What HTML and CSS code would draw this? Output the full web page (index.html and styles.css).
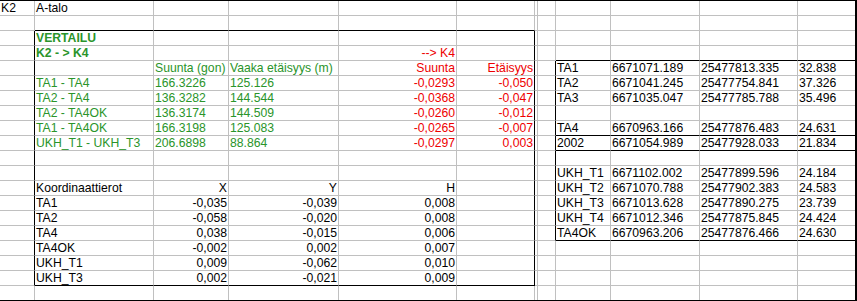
FILE: index.html
```html
<!DOCTYPE html>
<html lang="fi">
<head>
<meta charset="utf-8">
<title>K2 A-talo</title>
<link rel="stylesheet" href="styles.css">
</head>
<body>
<div class="sheet">
  <!-- row 0 -->
  <div class="c">K2</div><div class="c">A-talo</div><div class="c"></div><div class="c"></div><div class="c"></div><div class="c"></div><div class="c"></div><div class="c"></div><div class="c"></div><div class="c"></div><div class="c"></div><div class="c"></div>
  <!-- row 1 -->
  <div class="c"></div><div class="c bb"></div><div class="c bb"></div><div class="c bb"></div><div class="c bb"></div><div class="c bb"></div><div class="c"></div><div class="c"></div><div class="c"></div><div class="c"></div><div class="c"></div><div class="c"></div>
  <!-- row 2 -->
  <div class="c br"></div><div class="c g b">VERTAILU</div><div class="c"></div><div class="c"></div><div class="c"></div><div class="c br"></div><div class="c"></div><div class="c"></div><div class="c"></div><div class="c"></div><div class="c"></div><div class="c"></div>
  <!-- row 3 -->
  <div class="c br"></div><div class="c g b">K2 - &gt; K4</div><div class="c"></div><div class="c"></div><div class="c r red">--&gt; K4</div><div class="c br"></div><div class="c"></div><div class="c"></div><div class="c bb"></div><div class="c bb"></div><div class="c bb"></div><div class="c bb"></div>
  <!-- row 4 -->
  <div class="c br"></div><div class="c"></div><div class="c g">Suunta (gon)</div><div class="c g">Vaaka etäisyys (m)</div><div class="c r red">Suunta</div><div class="c r red br">Etäisyys</div><div class="c"></div><div class="c br"></div><div class="c">TA1</div><div class="c">6671071.189</div><div class="c">25477813.335</div><div class="c">32.838</div>
  <!-- row 5 -->
  <div class="c br"></div><div class="c g">TA1 - TA4</div><div class="c g">166.3226</div><div class="c g">125.126</div><div class="c r red">-0,0293</div><div class="c r red br">-0,050</div><div class="c"></div><div class="c br"></div><div class="c">TA2</div><div class="c">6671041.245</div><div class="c">25477754.841</div><div class="c">37.326</div>
  <!-- row 6 -->
  <div class="c br"></div><div class="c g">TA2 - TA4</div><div class="c g">136.3282</div><div class="c g">144.544</div><div class="c r red">-0,0368</div><div class="c r red br">-0,047</div><div class="c"></div><div class="c br"></div><div class="c">TA3</div><div class="c">6671035.047</div><div class="c">25477785.788</div><div class="c">35.496</div>
  <!-- row 7 -->
  <div class="c br"></div><div class="c g">TA2 - TA4OK</div><div class="c g">136.3174</div><div class="c g">144.509</div><div class="c r red">-0,0260</div><div class="c r red br">-0,012</div><div class="c"></div><div class="c br"></div><div class="c"></div><div class="c"></div><div class="c"></div><div class="c"></div>
  <!-- row 8 -->
  <div class="c br"></div><div class="c g">TA1 - TA4OK</div><div class="c g">166.3198</div><div class="c g">125.083</div><div class="c r red">-0,0265</div><div class="c r red br">-0,007</div><div class="c"></div><div class="c br"></div><div class="c bb">TA4</div><div class="c bb">6670963.166</div><div class="c bb">25477876.483</div><div class="c bb">24.631</div>
  <!-- row 9 -->
  <div class="c br"></div><div class="c g">UKH_T1 - UKH_T3</div><div class="c g">206.6898</div><div class="c g">88.864</div><div class="c r red">-0,0297</div><div class="c r red br">0,003</div><div class="c"></div><div class="c br"></div><div class="c bb">2002</div><div class="c bb">6671054.989</div><div class="c bb">25477928.033</div><div class="c bb">21.834</div>
  <!-- row 10 -->
  <div class="c br"></div><div class="c"></div><div class="c"></div><div class="c"></div><div class="c"></div><div class="c br"></div><div class="c"></div><div class="c br"></div><div class="c"></div><div class="c"></div><div class="c"></div><div class="c"></div>
  <!-- row 11 -->
  <div class="c br"></div><div class="c"></div><div class="c"></div><div class="c"></div><div class="c"></div><div class="c br"></div><div class="c"></div><div class="c br"></div><div class="c">UKH_T1</div><div class="c">6671102.002</div><div class="c">25477899.596</div><div class="c">24.184</div>
  <!-- row 12 -->
  <div class="c br"></div><div class="c">Koordinaattierot</div><div class="c r">X</div><div class="c r">Y</div><div class="c r">H</div><div class="c br"></div><div class="c"></div><div class="c br"></div><div class="c">UKH_T2</div><div class="c">6671070.788</div><div class="c">25477902.383</div><div class="c">24.583</div>
  <!-- row 13 -->
  <div class="c br"></div><div class="c">TA1</div><div class="c r">-0,035</div><div class="c r">-0,039</div><div class="c r">0,008</div><div class="c br"></div><div class="c"></div><div class="c br"></div><div class="c">UKH_T3</div><div class="c">6671013.628</div><div class="c">25477890.275</div><div class="c">23.739</div>
  <!-- row 14 -->
  <div class="c br"></div><div class="c">TA2</div><div class="c r">-0,058</div><div class="c r">-0,020</div><div class="c r">0,008</div><div class="c br"></div><div class="c"></div><div class="c br"></div><div class="c">UKH_T4</div><div class="c">6671012.346</div><div class="c">25477875.845</div><div class="c">24.424</div>
  <!-- row 15 -->
  <div class="c br"></div><div class="c">TA4</div><div class="c r">0,038</div><div class="c r">-0,015</div><div class="c r">0,006</div><div class="c br"></div><div class="c"></div><div class="c br"></div><div class="c bb">TA4OK</div><div class="c bb">6670963.206</div><div class="c bb">25477876.466</div><div class="c bb">24.630</div>
  <!-- row 16 -->
  <div class="c br"></div><div class="c">TA4OK</div><div class="c r">-0,002</div><div class="c r">0,002</div><div class="c r">0,007</div><div class="c br"></div><div class="c"></div><div class="c"></div><div class="c"></div><div class="c"></div><div class="c"></div><div class="c"></div>
  <!-- row 17 -->
  <div class="c br"></div><div class="c">UKH_T1</div><div class="c r">0,009</div><div class="c r">-0,062</div><div class="c r">0,010</div><div class="c br"></div><div class="c"></div><div class="c"></div><div class="c"></div><div class="c"></div><div class="c"></div><div class="c"></div>
  <!-- row 18 -->
  <div class="c br"></div><div class="c bb">UKH_T3</div><div class="c r bb">0,002</div><div class="c r bb">-0,021</div><div class="c r bb">0,009</div><div class="c br bb"></div><div class="c"></div><div class="c"></div><div class="c"></div><div class="c"></div><div class="c"></div><div class="c"></div>
  <!-- row 19 -->
  <div class="c"></div><div class="c"></div><div class="c"></div><div class="c"></div><div class="c"></div><div class="c"></div><div class="c"></div><div class="c"></div><div class="c"></div><div class="c"></div><div class="c"></div><div class="c"></div>
</div>
</body>
</html>
```
FILE: styles.css
```css
* { box-sizing: border-box; }
html, body { margin: 0; padding: 0; background: #fff; }

.sheet {
  width: 857px;
  display: grid;
  grid-template-columns: 35px 119px 75px 110px 118px 78px 2px 19px 55px 89px 98px 57px;
  grid-template-rows: repeat(19, 15px) 14px;
  border-top: 1px solid #000;
  border-right: 2px solid #000;
  border-bottom: 1px solid #000;
  font-family: "Liberation Sans", Arial, sans-serif;
  font-size: 12.2px;
  line-height: 14px;
  color: #000;
}

.c {
  border-right: 1px solid #c0c0c0;
  border-bottom: 1px solid #c0c0c0;
  padding: 0 1px 0 1px;
  white-space: nowrap;
  overflow: visible;
  min-width: 0;
}

.c:nth-child(12n) { border-right: none; }
.c:nth-last-child(-n+12) { border-bottom: none; }

.r { text-align: right; }
.g { color: #2a942a; }
.red { color: #ee0000; }
.b { font-weight: bold; }

.bb { border-bottom-color: #000; }
.br { border-right-color: #000; }
```
